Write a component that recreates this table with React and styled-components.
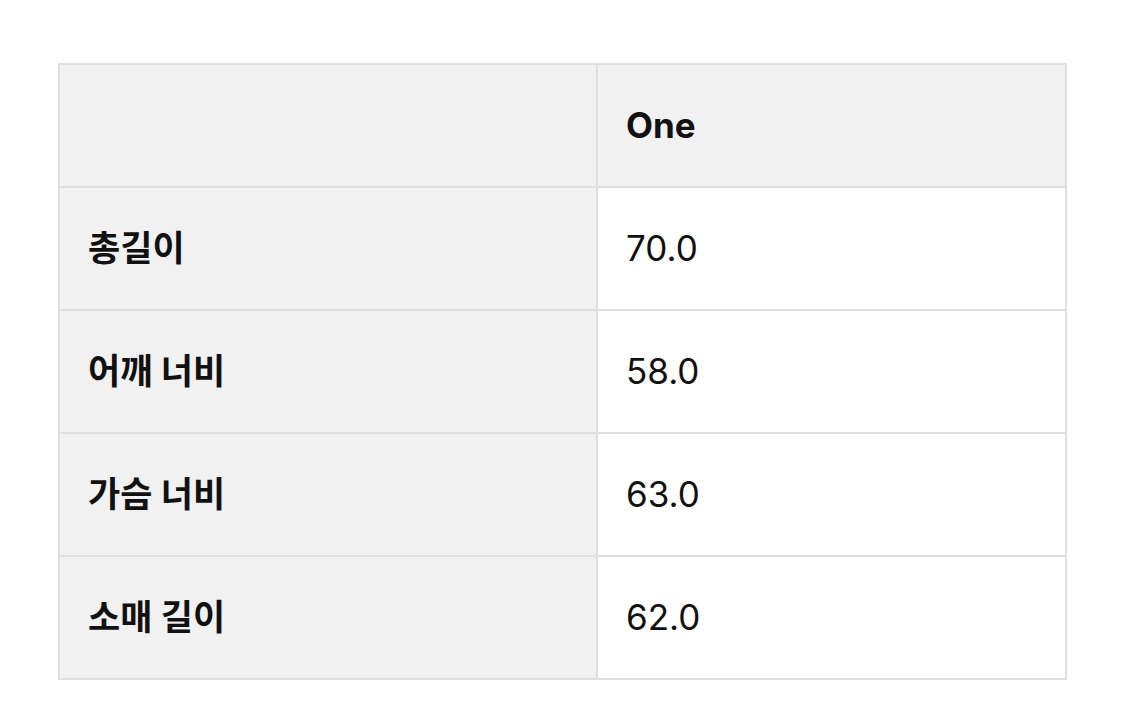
import styled, { createGlobalStyle } from "styled-components";

const rows = [
  { label: "총길이", value: "70.0" },
  { label: "어깨 너비", value: "58.0" },
  { label: "가슴 너비", value: "63.0" },
  { label: "소매 길이", value: "62.0" },
];

const GlobalStyle = createGlobalStyle`
  body {
    margin: 0;
    background: #ffffff;
    font-family: Inter, "Noto Sans CJK KR", sans-serif;
    color: #111111;
  }
`;

function App() {
  return (
    <Page>
      <GlobalStyle />
      <SizeTable>
        <thead>
          <tr>
            <HeadCell />
            <HeadCell>One</HeadCell>
          </tr>
        </thead>
        <tbody>
          {rows.map((row) => (
            <tr key={row.label}>
              <LabelCell>{row.label}</LabelCell>
              <ValueCell>{row.value}</ValueCell>
            </tr>
          ))}
        </tbody>
      </SizeTable>
    </Page>
  );
}

const Page = styled.div`
  padding: 63px 58px 0 58px;
`;

const SizeTable = styled.table`
  width: 1009px;
  border-collapse: collapse;
  table-layout: fixed;
`;

const Cell = styled.td`
  height: 123px;
  padding: 0 28px;
  border: 2px solid #dfdfdf;
  font-size: 35px;
  line-height: 1;
  text-align: left;
  vertical-align: middle;
  box-sizing: border-box;
`;

const HeadCell = styled(Cell).attrs({ as: "th" })`
  background: #f1f1f1;
  font-weight: 700;
  &:first-child {
    width: 538px;
  }
`;

const LabelCell = styled(Cell)`
  background: #f1f1f1;
  font-weight: 700;
`;

const ValueCell = styled(Cell)`
  background: #ffffff;
  font-weight: 400;
`;

export default App;
